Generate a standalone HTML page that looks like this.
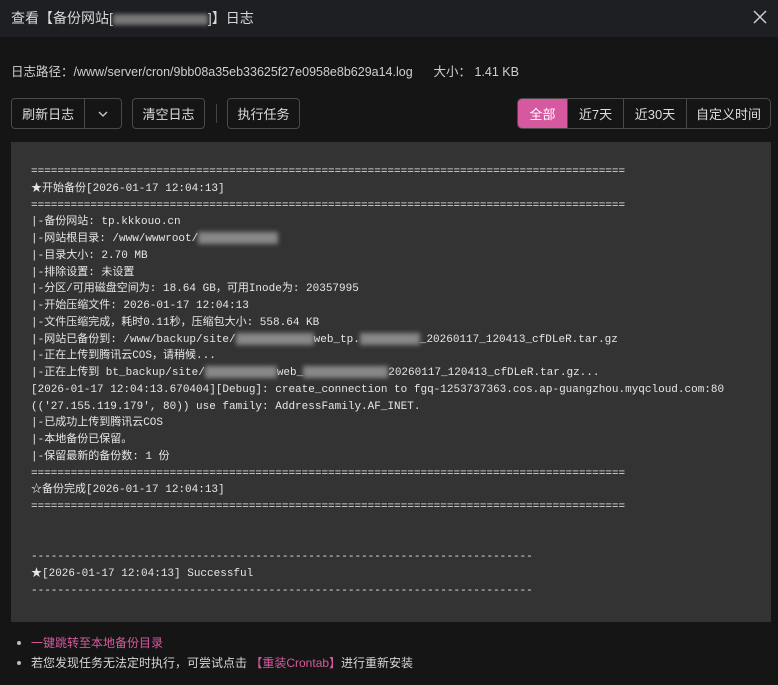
<!DOCTYPE html>
<html><head><meta charset="utf-8">
<style>
*{margin:0;padding:0;box-sizing:border-box}
body{width:778px;height:685px;background:#151515;font-family:"Liberation Sans","Noto Sans CJK SC",sans-serif;color:#ccc;position:relative;overflow:hidden}
.hdr{position:absolute;left:0;top:0;width:778px;height:37px;background:#1e1f22;}
.title{position:absolute;left:11px;top:8px;font-size:14px;color:#d8d8d8}
.blur{display:inline-block;background:#777;filter:blur(2px);vertical-align:middle}
.close{position:absolute;right:10px;top:9px;width:16px;height:16px}
.path{position:absolute;left:11px;top:61px;font-size:12.5px;color:#cfcfcf}
.btn{position:absolute;top:98px;height:31px;border:1px solid #4a4a4a;border-radius:4px;font-size:13px;color:#ddd;display:flex;align-items:center;justify-content:center;background:#151515}
.sep{position:absolute;left:216px;top:104px;width:1px;height:19px;background:#444}
.seg{position:absolute;top:98px;height:31px;left:517px;width:254px;border:1px solid #4a4a4a;border-radius:5px;display:flex;overflow:hidden;font-size:13px;color:#ddd}
.seg div{display:flex;align-items:center;justify-content:center;border-left:1px solid #4a4a4a}
.seg div:first-child{border-left:none;background:#d6599f;color:#fff}
.log{position:absolute;left:11px;top:142px;width:760px;height:480px;background:#333;}
.pre{position:absolute;left:20px;top:22px;font-family:"Liberation Mono","Noto Sans CJK SC",monospace;font-size:11px;color:#e6e6e6}
.pre div{height:16.76px;line-height:16.76px;white-space:pre;overflow:visible}
.b2{display:inline-block;background:#888;filter:blur(2.5px);height:12px;vertical-align:middle}
ul{position:absolute;left:17px;top:633px;list-style:none;font-size:12px;line-height:20px;color:#d5d5d5}
li{padding-left:14px;position:relative}
li:before{content:"";position:absolute;left:0;top:8px;width:4px;height:4px;border-radius:2px;background:#bbb}
.pk{color:#d6599f}
</style></head><body>
<div class="hdr"><div class="title">查看【备份网站[<span class="blur" style="width:95px;height:11px"></span>]】日志</div>
<svg class="close" viewBox="0 0 16 16"><path d="M2 2L14 14M14 2L2 14" stroke="#ccc" stroke-width="1.5"/></svg></div>
<div class="path">日志路径：/www/server/cron/9bb08a35eb33625f27e0958e8b629a14.log&nbsp;&nbsp;&nbsp;&nbsp;&nbsp;&nbsp;大小：&nbsp;1.41 KB</div>
<div class="btn" style="left:11px;width:111px;justify-content:flex-start"><span style="width:73px;text-align:center">刷新日志</span><span style="width:37px;height:29px;border-left:1px solid #4a4a4a;display:flex;align-items:center;justify-content:center"><svg width="10" height="6" viewBox="0 0 10 6"><path d="M1 1L5 5L9 1" stroke="#ccc" fill="none" stroke-width="1.3"/></svg></span></div>
<div class="btn" style="left:132px;width:73px">清空日志</div>
<div class="sep"></div>
<div class="btn" style="left:227px;width:73px">执行任务</div>
<div class="seg"><div style="width:49px">全部</div><div style="width:56px">近7天</div><div style="width:63px">近30天</div><div style="flex:1">自定义时间</div></div>
<div class="log"><div class="pre">
<div>==========================================================================================</div>
<div>★开始备份[2026-01-17 12:04:13]</div>
<div>==========================================================================================</div>
<div>|-备份网站: tp.kkkouo.cn</div>
<div>|-网站根目录: /www/wwwroot/<span class="b2" style="width:80px"></span></div>
<div>|-目录大小: 2.70 MB</div>
<div>|-排除设置: 未设置</div>
<div>|-分区/可用磁盘空间为: 18.64 GB，可用Inode为: 20357995</div>
<div>|-开始压缩文件: 2026-01-17 12:04:13</div>
<div>|-文件压缩完成，耗时0.11秒，压缩包大小: 558.64 KB</div>
<div>|-网站已备份到: /www/backup/site/<span class="b2" style="width:78px"></span>web_tp.<span class="b2" style="width:60px"></span>_20260117_120413_cfDLeR.tar.gz</div>
<div>|-正在上传到腾讯云COS，请稍候...</div>
<div>|-正在上传到 bt_backup/site/<span class="b2" style="width:72px"></span>web_<span class="b2" style="width:85px"></span>20260117_120413_cfDLeR.tar.gz...</div>
<div>[2026-01-17 12:04:13.670404][Debug]: create_connection to fgq-1253737363.cos.ap-guangzhou.myqcloud.com:80</div>
<div>(('27.155.119.179', 80)) use family: AddressFamily.AF_INET.</div>
<div>|-已成功上传到腾讯云COS</div>
<div>|-本地备份已保留。</div>
<div>|-保留最新的备份数: 1 份</div>
<div>==========================================================================================</div>
<div>☆备份完成[2026-01-17 12:04:13]</div>
<div>==========================================================================================</div>
<div> </div>
<div> </div>
<div>----------------------------------------------------------------------------</div>
<div>★[2026-01-17 12:04:13] Successful</div>
<div>----------------------------------------------------------------------------</div>
</div></div>
<ul><li class="pk">一键跳转至本地备份目录</li><li>若您发现任务无法定时执行，可尝试点击 <span class="pk">【重装Crontab】</span>进行重新安装</li></ul>
</body></html>
